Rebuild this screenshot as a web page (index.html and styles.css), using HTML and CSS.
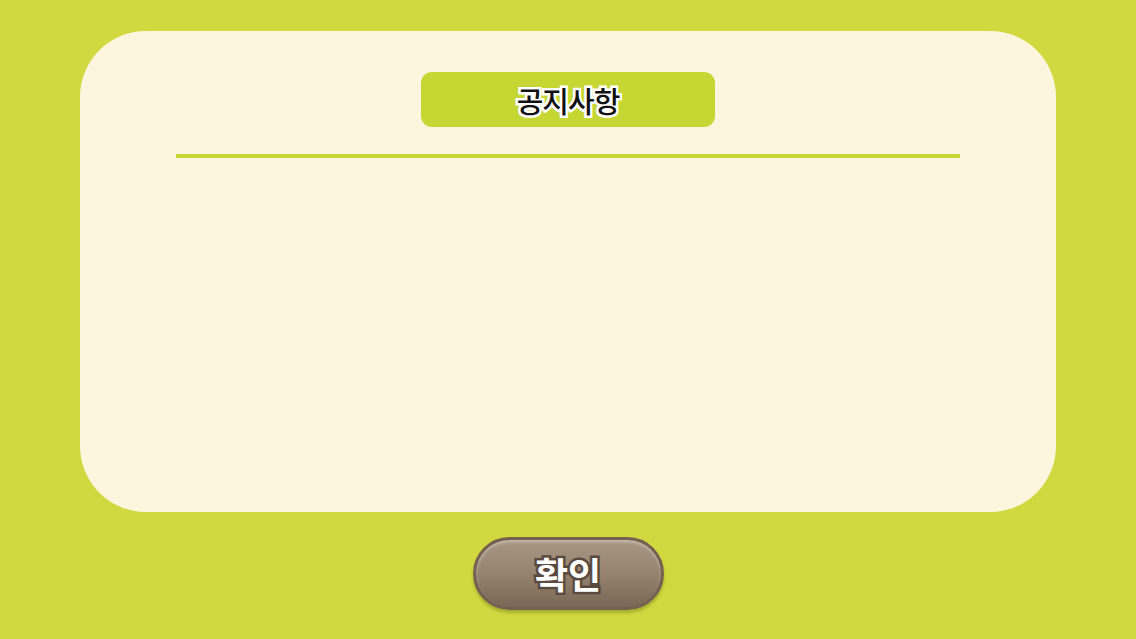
FILE: index.html
```html
<!DOCTYPE html>
<html lang="ko">
<head>
<meta charset="utf-8">
<link rel="stylesheet" href="styles.css">
</head>
<body>
<div class="screen">
  <div class="panel">
    <div class="title">공지사항</div>
    <div class="rule"></div>
    <div class="content"></div>
  </div>
  <div class="actions">
    <button class="ok">확인</button>
  </div>
</div>
</body>
</html>
```

FILE: styles.css
```css
html, body {
  margin: 0;
  padding: 0;
}
body {
  background: #d0d93f;
  width: 1136px;
  height: 639px;
  overflow: hidden;
  font-family: "Noto Sans CJK KR", "Noto Sans", sans-serif;
}
.screen {
  display: flex;
  flex-direction: column;
  align-items: center;
  padding-top: 31px;
}
.panel {
  width: 976px;
  height: 481px;
  background: #fcf6df;
  border-radius: 66px;
  display: flex;
  flex-direction: column;
  align-items: center;
  box-sizing: border-box;
  padding-top: 41px;
}
.title {
  width: 294px;
  height: 55px;
  background: #c6d632;
  border-radius: 11px;
  display: flex;
  align-items: center;
  justify-content: center;
  font-size: 29px;
  font-weight: 500;
  color: #111;
  -webkit-text-stroke: 5px #fff;
  paint-order: stroke fill;
  letter-spacing: -1px;
}
.rule {
  width: 784px;
  height: 4px;
  background: #c6d632;
  margin-top: 27px;
}
.content {
  flex: 1;
}
.actions {
  margin-top: 25px;
  display: flex;
  justify-content: center;
}
.ok {
  width: 191px;
  height: 73px;
  border-radius: 37px;
  border: 3px solid #75614f;
  background: linear-gradient(#a89784 0%, #95836f 50%, #7a6856 100%);
  box-shadow: inset 0 2px 3px rgba(255,255,255,0.35), 0 3px 3px rgba(90,100,20,0.35);
  font-family: "Noto Sans CJK KR", "Noto Sans", sans-serif;
  font-size: 36px;
  font-weight: 700;
  color: #fff;
  -webkit-text-stroke: 5px #5a4a3e;
  paint-order: stroke fill;
  padding: 0 0 2px;
  display: flex;
  align-items: center;
  justify-content: center;
  box-sizing: border-box;
}
```
